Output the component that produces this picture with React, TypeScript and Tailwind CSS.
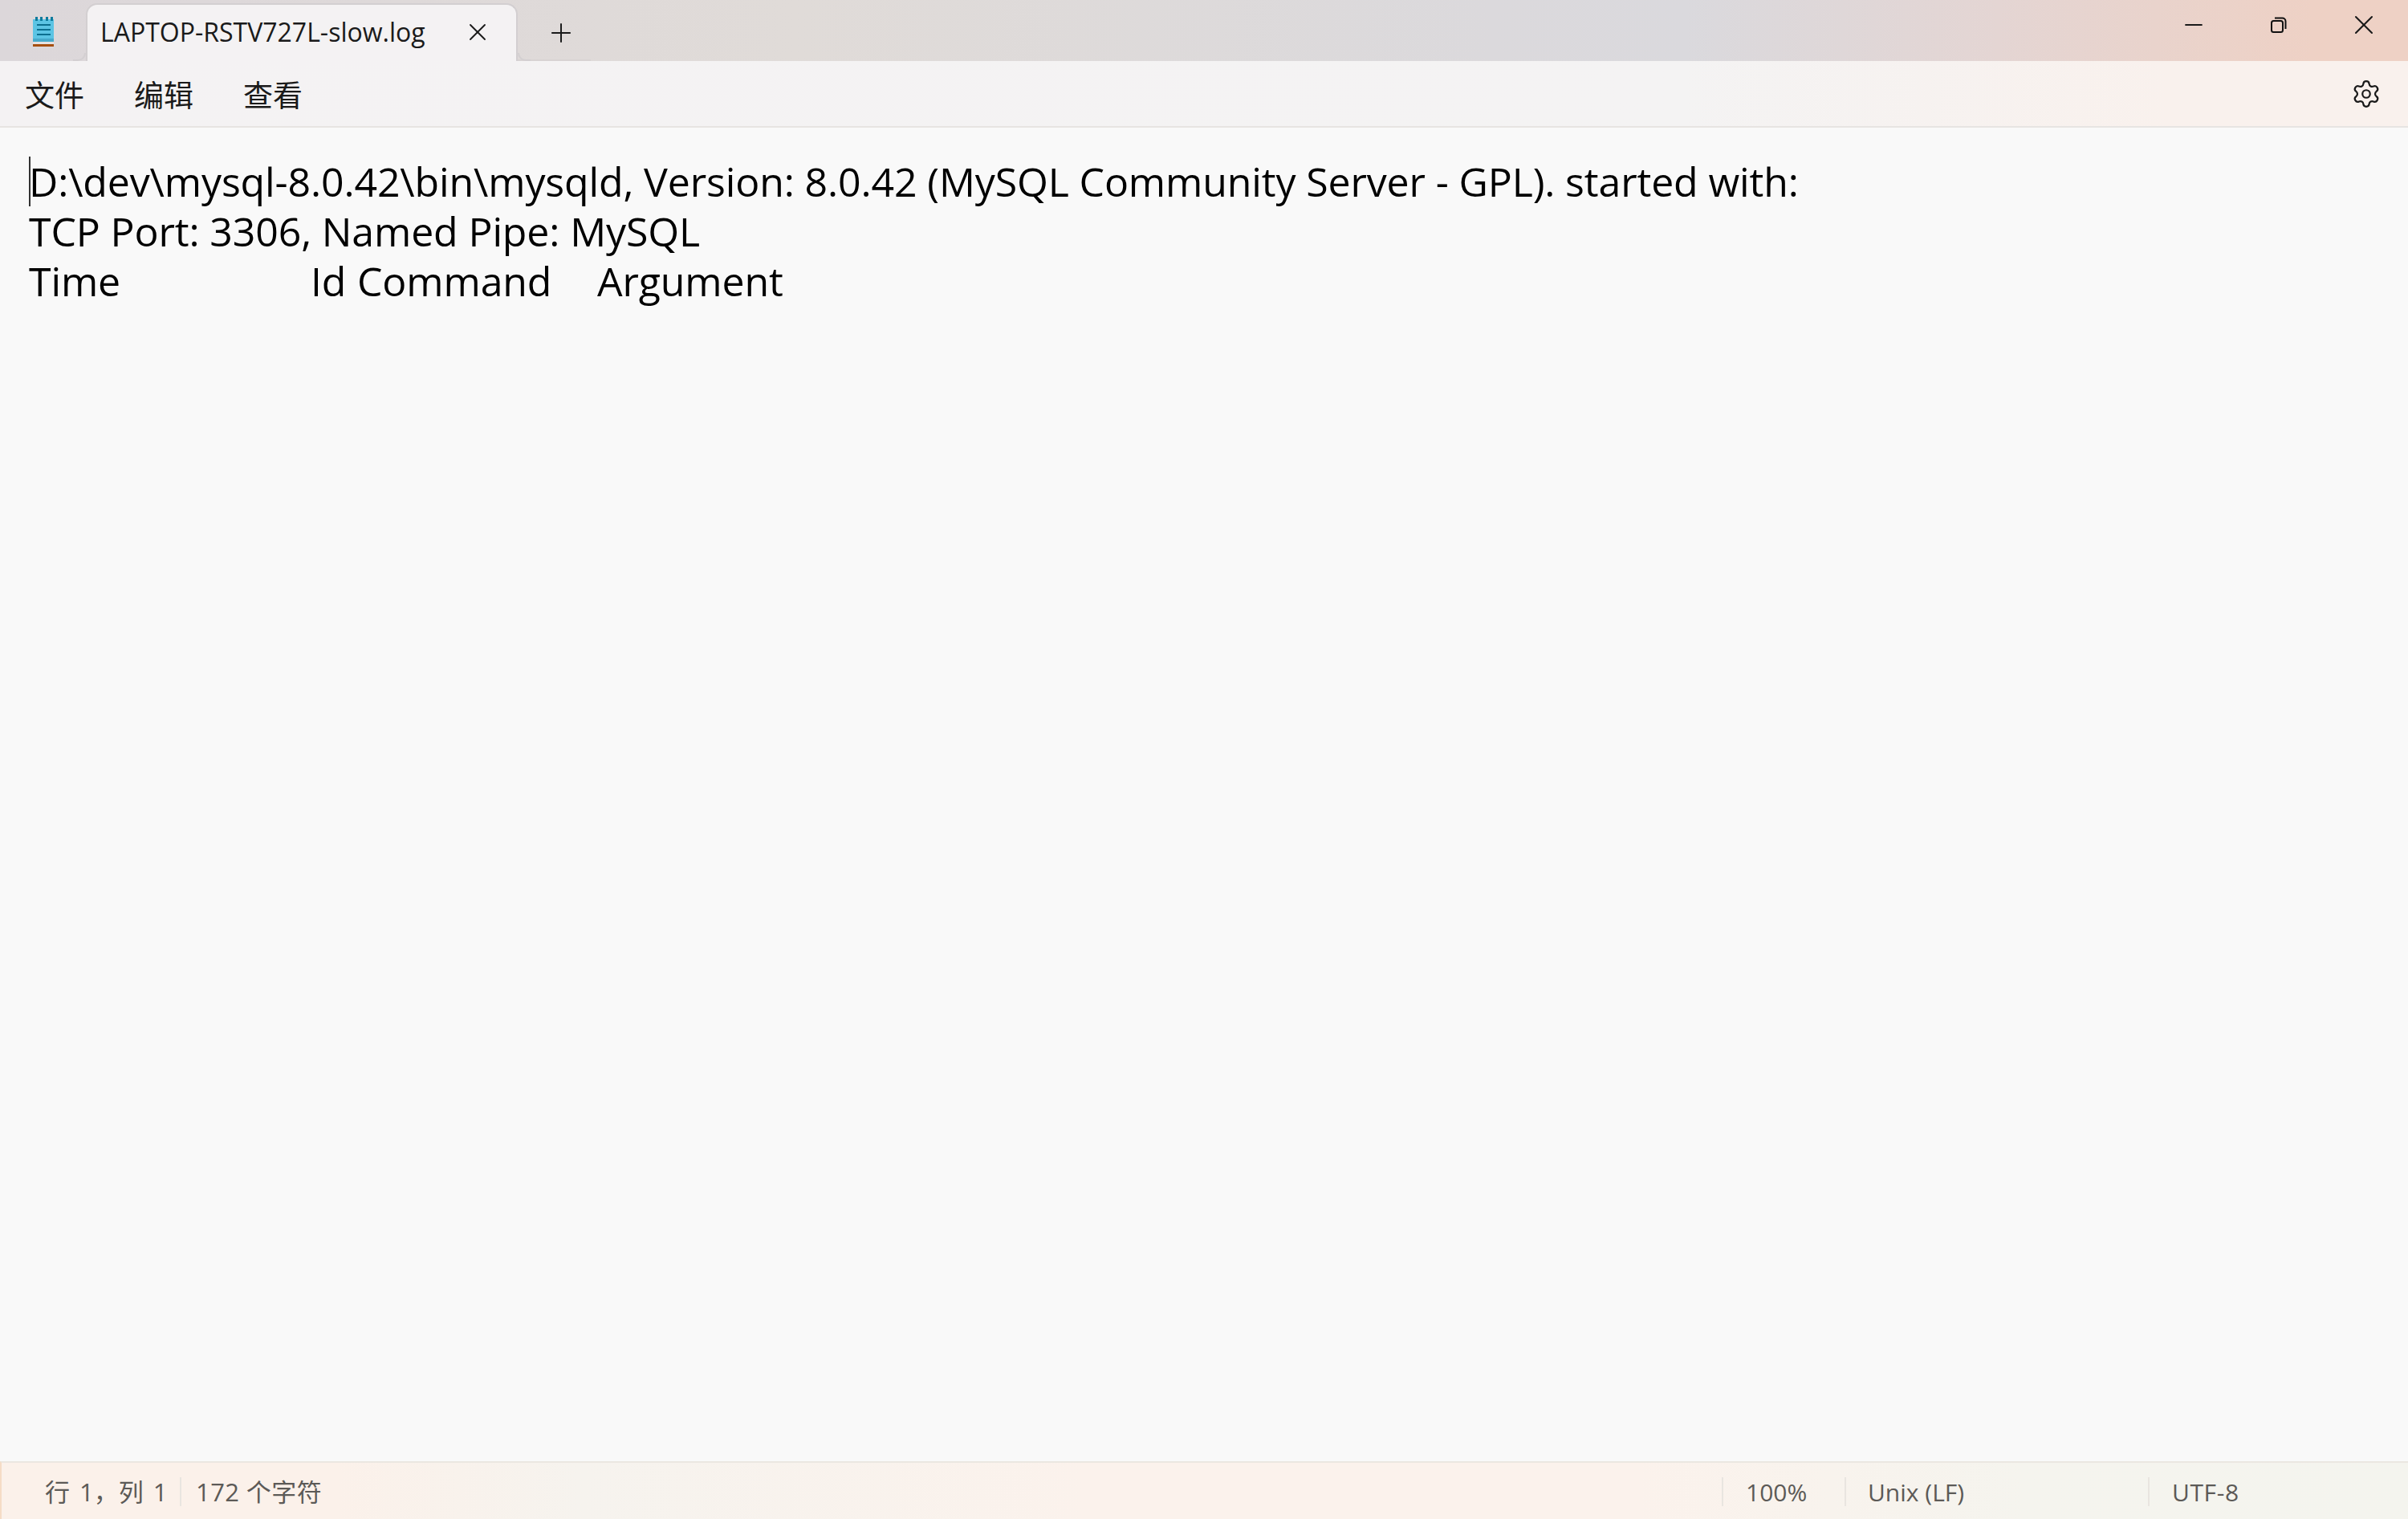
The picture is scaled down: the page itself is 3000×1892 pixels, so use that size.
import { Minus, Plus, Settings, X } from "lucide-react";

const Divider = () => <div className="h-[36px] w-[2px] bg-[#e9e5e0]" />;

const NotepadIcon = () => (
  <svg width="28" height="37" viewBox="0 0 28 37">
    <rect x="1" y="3" width="26" height="28" fill="#5cc4e4" />
    <rect x="1" y="27" width="26" height="4" fill="#46aacb" />
    <rect x="1" y="31" width="26" height="3" fill="#e4e2e2" />
    <rect x="1" y="34" width="26" height="3" fill="#a64f10" />
    <rect x="4" y="0" width="3" height="5" fill="#0d7a9c" />
    <rect x="10" y="0" width="3" height="5" fill="#0d7a9c" />
    <rect x="17" y="0" width="3" height="5" fill="#0d7a9c" />
    <rect x="23" y="0" width="3" height="5" fill="#0d7a9c" />
    <rect x="6" y="9" width="17" height="2" fill="#0c6f90" />
    <rect x="6" y="15" width="17" height="2" fill="#0c6f90" />
    <rect x="6" y="21" width="17" height="2" fill="#0c6f90" />
  </svg>
);

const RestoreIcon = () => (
  <svg width="20" height="20" viewBox="0 0 20 20" fill="none" stroke="#111" strokeWidth="2">
    <rect x="1" y="5" width="14" height="14" rx="2.5" />
    <path d="M5 1.5h9.5A4 4 0 0 1 18.5 5.500V15" />
  </svg>
);

export default function App() {
  return (
    <div className="flex h-[1892px] w-[3000px] flex-col overflow-hidden bg-[#f9f9f9] font-['Open_Sans','Noto_Sans_CJK_SC',sans-serif] text-[#1a1a1a]">
      {/* title bar */}
      <div className="flex h-[76px] shrink-0 items-end bg-[linear-gradient(90deg,#dcd7da_0%,#e0dbd8_33%,#dbd9dc_62%,#dad9dd_70%,#e4d5d3_83%,#eed1c5_96%)]">
        <div className="flex h-[76px] w-[107px] items-center justify-center pt-[3px]">
          <NotepadIcon />
        </div>
        <div className="relative flex h-[72px] w-[538px] items-center justify-between rounded-t-[14px] border-x-2 border-t-2 border-[#d3cfd1] bg-[#f4f2f3] pb-[2px] pl-[16px] pr-[30px]">
          <div className="absolute -left-[18px] bottom-0 h-[10px] w-[16px] rounded-br-[10px] border-b-2 border-r-2 border-[#d3cfd1]" />
          <span className="text-[32px]">LAPTOP-RSTV727L-slow.log</span>
          <X size={36} strokeWidth={1.25} />
          <div className="absolute -right-[18px] bottom-0 h-[10px] w-[16px] rounded-bl-[10px] border-b-2 border-l-2 border-[#d3cfd1]" />
        </div>
        <div className="flex h-[76px] w-[91px] items-center justify-center border-b-2 border-[#d8d3d3] pl-[16px] pt-[8px]">
          <Plus size={38} strokeWidth={1.25} />
        </div>
        <div className="flex-1" />
        <div className="flex h-[76px] items-start pr-[2px]">
          <div className="flex h-[62px] w-[106px] items-center justify-center">
            <Minus size={34} strokeWidth={1.4} />
          </div>
          <div className="flex h-[62px] w-[106px] items-center justify-center">
            <RestoreIcon />
          </div>
          <div className="flex h-[62px] w-[106px] items-center justify-center">
            <X size={40} strokeWidth={1.25} />
          </div>
        </div>
      </div>

      {/* menu bar */}
      <div className="flex h-[83px] shrink-0 items-center justify-between border-b-2 border-[#e7e4e2] bg-[linear-gradient(90deg,#f4f2f3_0%,#f4f3f3_70%,#f9f1ed_90%)] pl-[31px] pr-[33px]">
        <div className="flex gap-[62px] pt-[3px] text-[37px] leading-none">
          <span>文件</span>
          <span>编辑</span>
          <span>查看</span>
        </div>
        <Settings size={38} strokeWidth={1.4} />
      </div>

      {/* editor */}
      <div className="relative flex-1 whitespace-pre pl-[36px] pt-[36px] text-[50px] leading-[62px] tracking-[-0.130px] text-black">
        <div className="absolute left-[36px] top-[36px] h-[62px] w-[2px] bg-[#333]" />
        <div>D:\dev\mysql-8.0.42\bin\mysqld, Version: 8.0.42 (MySQL Community Server - GPL). started with:</div>
        <div>TCP Port: 3306, Named Pipe: MySQL</div>
        <div className="flex">
          <span className="w-[351px]">Time</span>
          <span className="w-[58px]">Id</span>
          <span className="w-[299px]">Command</span>
          <span>Argument</span>
        </div>
      </div>

      {/* status bar */}
      <div className="flex h-[72px] shrink-0 items-center border-l-2 border-t-2 border-l-[#f5dcc6] border-t-[#ebe7e1] bg-[linear-gradient(90deg,#fbf1ea_0%,#fbf1ea_14%,#f6f3ee_24%,#fbf2ec_45%,#fbf2ec_68%,#f5f4ee_84%,#f4f4ee_100%)] pt-[2px] text-[30px] text-[#5c5a57]">
        <span className="w-[222px] pl-[54px] text-[31px] [word-spacing:4px]">行 1，列 1</span>
        <Divider />
        <span className="ml-[18px] text-[31px] tracking-[0.4px]">172 个字符</span>
        <div className="flex-1" />
        <Divider />
        <span className="w-[151px] pl-[28px]">100%</span>
        <Divider />
        <span className="w-[376px] pl-[27px]">Unix (LF)</span>
        <Divider />
        <span className="w-[322px] pl-[28px] tracking-[0.6px]">UTF-8</span>
      </div>
    </div>
  );
}
